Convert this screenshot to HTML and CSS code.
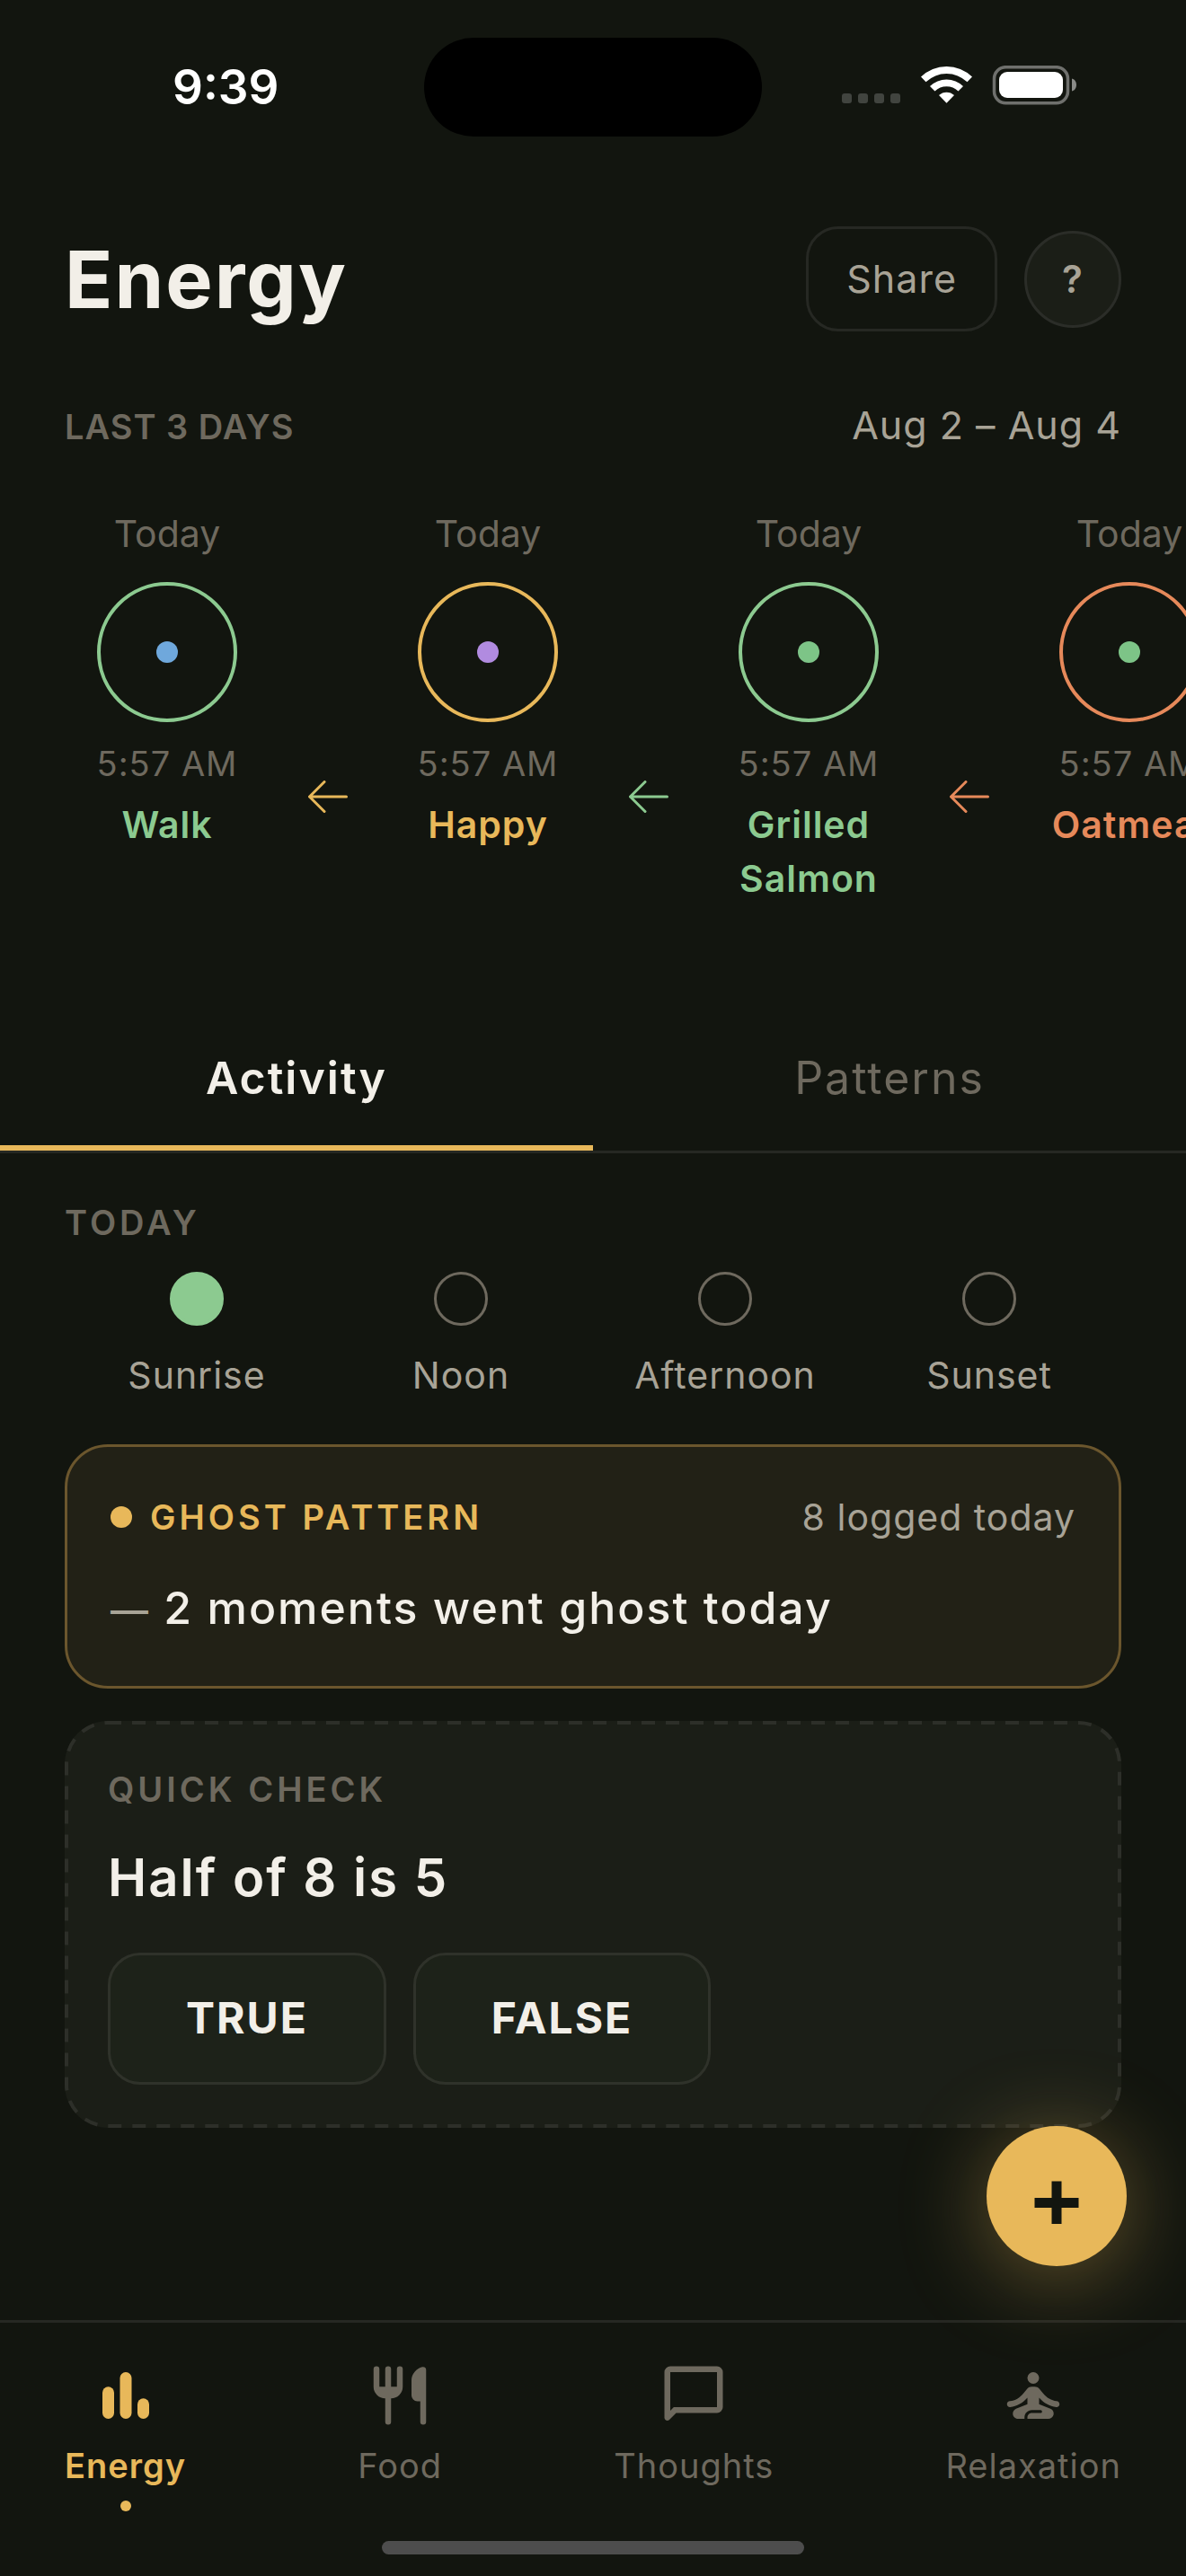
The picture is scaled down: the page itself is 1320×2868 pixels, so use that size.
FILE: index.html
```html
<!DOCTYPE html>
<html lang="en">
<head>
<meta charset="utf-8">
<meta name="viewport" content="width=device-width">
<title>Energy</title>
<link rel="stylesheet" href="styles.css">
</head>
<body>
<div class="status">
  <time class="status-time">9:39</time>
  <div class="island"></div>
  <svg class="status-icons" viewBox="0 0 262 48" aria-hidden="true">
    <g fill="#41443f"><rect x="0" y="31" width="11" height="11" rx="3"/><rect x="18" y="31" width="11" height="11" rx="3"/><rect x="36" y="31" width="11" height="11" rx="3"/><rect x="54" y="31" width="11" height="11" rx="3"/></g>
    <g fill="#fff">
      <path d="M88 12.500a41 41 0 0 1 57 0l-5.500 5.800a33 33 0 0 0-46 0z"/>
      <path d="M98 23a26.500 26.500 0 0 1 37 0l-5.500 5.500a19 19 0 0 0-26 0z"/>
      <path d="M108 33a12.500 12.500 0 0 1 17 0l-8.500 8.700z"/>
      <rect x="175" y="7" width="71" height="29" rx="9"/>
    </g>
    <rect x="169.500" y="1.700" width="82" height="40" rx="13" fill="none" stroke="#6f706d" stroke-width="3.500"/>
    <path d="M256 14.500c3.500 1 5 4 5 7s-1.500 6-5 7z" fill="#8a8b88"/>
  </svg>
</div>

<main class="page">
  <header class="header">
    <h1 class="title">Energy</h1>
    <button class="share" type="button">Share</button>
    <button class="help" type="button" aria-label="Help">?</button>
  </header>

  <div class="range">
    <h2 class="caption caption-tight">LAST 3 DAYS</h2>
    <span class="range-dates">Aug 2 – Aug 4</span>
  </div>

  <div class="timeline">
    <article class="moment green"><span class="day">Today</span><span class="ring"><i class="core core-blue"></i></span><span class="clock">5:57 AM</span><span class="name">Walk</span></article>
    <svg class="arrow gold" viewBox="0 0 44 36"><path d="M42.500 18H1.500M18 1.500L1.500 18 18 34.500"/></svg>
    <article class="moment gold"><span class="day">Today</span><span class="ring"><i class="core core-purple"></i></span><span class="clock">5:57 AM</span><span class="name">Happy</span></article>
    <svg class="arrow green" viewBox="0 0 44 36"><path d="M42.500 18H1.500M18 1.500L1.500 18 18 34.500"/></svg>
    <article class="moment green"><span class="day">Today</span><span class="ring"><i class="core core-green"></i></span><span class="clock">5:57 AM</span><span class="name">Grilled Salmon</span></article>
    <svg class="arrow orange" viewBox="0 0 44 36"><path d="M42.500 18H1.500M18 1.500L1.500 18 18 34.500"/></svg>
    <article class="moment orange"><span class="day">Today</span><span class="ring"><i class="core core-green"></i></span><span class="clock">5:57 AM</span><span class="name">Oatmeal</span></article>
  </div>

  <div class="tabs" role="tablist">
    <button class="tab tab-active" type="button" role="tab" aria-selected="true">Activity</button>
    <button class="tab" type="button" role="tab" aria-selected="false">Patterns</button>
  </div>

  <section class="today">
    <h2 class="caption">TODAY</h2>
    <ul class="phases">
      <li class="phase"><i class="phase-dot phase-done"></i>Sunrise</li>
      <li class="phase"><i class="phase-dot"></i>Noon</li>
      <li class="phase"><i class="phase-dot"></i>Afternoon</li>
      <li class="phase"><i class="phase-dot"></i>Sunset</li>
    </ul>
  </section>

  <section class="card ghost">
    <div class="ghost-head">
      <i class="ghost-dot"></i>
      <h2 class="caption ghost-title">GHOST PATTERN</h2>
      <span class="ghost-count">8 logged today</span>
    </div>
    <p class="ghost-text"><span class="dash">—</span> 2 moments went ghost today</p>
  </section>

  <section class="card quick">
    <svg class="quick-edge" aria-hidden="true"><rect class="quick-line" x="2" y="2" rx="46"/></svg>
    <h2 class="caption">QUICK CHECK</h2>
    <p class="question">Half of 8 is 5</p>
    <div class="answers">
      <button class="answer" type="button">TRUE</button>
      <button class="answer" type="button">FALSE</button>
    </div>
  </section>
</main>

<nav class="nav">
  <div class="nav-items">
    <a class="nav-item nav-active" href="#energy" aria-current="page">
      <svg class="nav-icon" viewBox="0 0 24 24"><rect x="4" y="9" width="4" height="11" rx="2"/><rect x="10" y="4" width="4" height="16" rx="2"/><rect x="16" y="13" width="4" height="7" rx="2"/></svg>
      Energy
    </a>
    <a class="nav-item" href="#food">
      <svg class="nav-icon" viewBox="0 0 24 24"><path d="M7 9V3a1 1 0 0 1 2 0v6h2V3a1 1 0 0 1 2 0v6a4 4 0 0 1-4 4v8a1 1 0 0 1-2 0v-8a4 4 0 0 1-4-4V3a1 1 0 0 1 2 0v6z"/><path d="M16 6.800c0-2.100 1.700-4.100 3.700-4.550a1 1 0 0 1 1.300 1V21a1 1 0 0 1-2 0v-7h-1a2 2 0 0 1-2-2z"/></svg>
      Food
    </a>
    <a class="nav-item" href="#thoughts">
      <svg class="nav-icon" viewBox="0 0 24 24"><path fill-rule="evenodd" d="M20 2H4a2 2 0 0 0-2 2v15.600c0 .89 1.080 1.340 1.700.7L6 18h14a2 2 0 0 0 2-2V4a2 2 0 0 0-2-2zM20 16H5.200L4 17.200V4h16z"/></svg>
      Thoughts
    </a>
    <a class="nav-item" href="#relaxation">
      <svg class="nav-icon" viewBox="0 0 24 24"><circle cx="12" cy="6" r="2"/><path d="M21 15c0-.56-.46-1-1.010-1.050-1.800-.2-3.350-1.130-4.590-2.630l-1.340-1.600C13.680 9.260 13.120 9 12.530 9h-1.050c-.6 0-1.150.26-1.530.72l-1.340 1.600C7.370 12.820 5.820 13.770 4 13.960 3.450 14 3 14.440 3 15c0 .6.5 1.040 1.100.98 2.300-.28 4.320-1.430 5.900-3.230V15l-3.880 1.550C5.450 16.820 5 17.480 5 18.210 5 19.200 5.800 20 6.790 20H9v-.5c0-1.380 1.120-2.500 2.500-2.500h3c.28 0 .5.22.5.5s-.22.5-.5.5h-3c-.83 0-1.500.67-1.500 1.500v.5h7.100c.85 0 1.650-.54 1.850-1.370.21-.89-.27-1.760-1.080-2.080L14 15v-2.250c1.580 1.800 3.600 2.950 5.900 3.230.6.060 1.100-.38 1.100-.98z"/></svg>
      Relaxation
    </a>
  </div>
  <div class="home-bar"></div>
</nav>

<button class="add" type="button" aria-label="Add moment">
  <svg class="add-icon" viewBox="0 0 156 156"><path d="M72.500 61.500h11v18.500h19v11h-19v18h-11v-18h-19v-11h19z"/></svg>
</button>
</body>
</html>
```
FILE: styles.css
```css
:root {
  --bg: #12150f;
  --text: #f2efe8;
  --soft: #a8a396;
  --muted: #6e695e;
  --line: #262823;
  --gold: #e8b85a;
  --green: #8cca90;
  --orange: #e6895a;
  --pad: 72px;
  --track: 1px;
  --track-large: 2px;
  --track-caps: 4px;
}

* { box-sizing: border-box; }

body {
  margin: 0;
  min-height: 100vh;
  display: flex;
  flex-direction: column;
  background: var(--bg);
  color: var(--text);
  font-family: Inter, "Liberation Sans", sans-serif;
  font-size: 41px;
  line-height: 54px;
  letter-spacing: var(--track);
}

h1, h2, p, ul { margin: 0; padding: 0; }
button { font: inherit; letter-spacing: inherit; color: inherit; cursor: pointer; }

/* Status bar */
.status {
  display: grid;
  grid-template-columns: 1fr 376px 1fr;
  align-items: center;
  padding: 42px var(--pad) 34px;
}
.status-time {
  padding-left: 120px;
  color: #fff;
  font-size: 53px;
  font-weight: 600;
  letter-spacing: 0;
}
.island { height: 110px; border-radius: 55px; background: #000; }
.status-icons { width: 262px; height: 48px; margin-right: 49px; justify-self: end; }

/* Header */
.page { flex: 1; }
.header {
  display: flex;
  align-items: center;
  gap: 30px;
  padding: 66px var(--pad) 0;
}
.title {
  flex: 1;
  font-size: 88px;
  line-height: 108px;
  font-weight: 700;
  letter-spacing: var(--track-large);
}
.share {
  padding: 28px 42px 29px;
  border: 3px solid var(--line);
  border-radius: 36px;
  background: none;
  color: var(--soft);
  font-size: 43px;
}
.help {
  width: 108px;
  height: 108px;
  padding: 0;
  border: 3px solid #2b2d28;
  border-radius: 50%;
  background: #1b1e17;
  color: var(--soft);
  font-size: 42px;
  font-weight: 600;
}

.caption {
  font-size: 38px;
  line-height: 48px;
  font-weight: 600;
  letter-spacing: var(--track-caps);
  color: var(--muted);
}
.caption-tight { letter-spacing: var(--track); }

.range {
  display: flex;
  justify-content: space-between;
  align-items: baseline;
  padding: 77px var(--pad) 0;
}
.range-dates { color: var(--soft); font-size: 43px; }

/* Timeline */
.timeline {
  display: flex;
  align-items: flex-start;
  margin-top: 67px;
  padding: 0 var(--pad);
  overflow-x: auto;
  scrollbar-width: none;
}
.moment {
  flex: 0 0 228px;
  display: flex;
  flex-direction: column;
  align-items: center;
  text-align: center;
}
.day { color: var(--muted); letter-spacing: 0; }
.ring {
  display: grid;
  place-items: center;
  width: 156px;
  height: 156px;
  margin: 27px 0 22px;
  border: 4px solid currentColor;
  border-radius: 50%;
}
.core { width: 24px; height: 24px; border-radius: 50%; }
.core-blue { background: #6fa8dc; }
.core-purple { background: #b18be0; }
.core-green { background: #7dc487; }
.clock { color: var(--muted); font-size: 38px; line-height: 48px; }
.name { margin-top: 14px; line-height: 60px; font-weight: 600; }
.arrow {
  flex: 0 0 44px;
  height: 36px;
  margin: 302px 42px 0 43px;
  fill: none;
  stroke: currentColor;
  stroke-width: 3;
  stroke-linecap: round;
  stroke-linejoin: round;
}
.green { color: var(--green); }
.gold { color: var(--gold); }
.orange { color: var(--orange); }

/* Tabs */
.tabs {
  display: grid;
  grid-template-columns: 1fr 1fr;
  margin-top: 117px;
  border-bottom: 3px solid var(--line);
}
.tab {
  padding: 45px 0;
  border: 0;
  border-bottom: 6px solid transparent;
  background: none;
  color: var(--muted);
  font-size: 50px;
  line-height: 60px;
  letter-spacing: var(--track-large);
}
.tab-active { border-color: var(--gold); color: var(--text); font-weight: 600; }

/* Phases of the day */
.today { padding: 53px var(--pad) 50px; }
.phases {
  display: grid;
  grid-template-columns: repeat(4, 1fr);
  margin-top: 31px;
  list-style: none;
}
.phase {
  display: flex;
  flex-direction: column;
  align-items: center;
  gap: 28px;
  color: var(--soft);
}
.phase-dot {
  width: 60px;
  height: 60px;
  border: 3px solid var(--muted);
  border-radius: 50%;
}
.phase-done { border-color: var(--green); background: var(--green); }

/* Cards */
.card { margin: 0 var(--pad) 36px; border-radius: 48px; }
.ghost {
  padding: 51px 48px 54px;
  border: 3px solid #6b562d;
  background: #222116;
}
.ghost-head { display: flex; align-items: center; gap: 20px; }
.ghost-dot { width: 24px; height: 24px; border-radius: 50%; background: var(--gold); }
.ghost-title { flex: 1; color: var(--gold); }
.ghost-count { color: var(--soft); }
.ghost-text {
  margin-top: 41px;
  font-size: 50px;
  line-height: 66px;
  font-weight: 500;
  letter-spacing: var(--track-large);
}
.dash { color: var(--soft); font-size: 42px; line-height: 42px; }

.quick { position: relative; padding: 52px 48px 48px; background: #1b1e17; }
.quick-edge { position: absolute; inset: 0; width: 100%; height: 100%; }
.quick-line {
  width: calc(100% - 4px);
  height: calc(100% - 4px);
  fill: none;
  stroke: #2d2f29;
  stroke-width: 4;
  stroke-dasharray: 15 12;
}
.question {
  margin-top: 35px;
  font-size: 58px;
  line-height: 78px;
  font-weight: 600;
  letter-spacing: var(--track-large);
}
.answers { display: flex; gap: 30px; margin-top: 45px; }
.answer {
  position: relative;
  padding: 43px 84px 44px;
  border: 3px solid #2f322a;
  border-radius: 36px;
  background: #1d2219;
  font-size: 48px;
  font-weight: 700;
  line-height: 54px;
  letter-spacing: var(--track-large);
}

/* Bottom navigation */
.nav { padding: 42px var(--pad) 24px; border-top: 3px solid var(--line); }
.nav-items { display: flex; justify-content: space-between; align-items: flex-start; }
.nav-item {
  display: flex;
  flex-direction: column;
  align-items: center;
  gap: 15px;
  color: var(--muted);
  font-size: 38px;
  line-height: 48px;
  text-decoration: none;
}
.nav-icon { width: 78px; height: 78px; fill: currentColor; }
.nav-active { color: var(--gold); font-weight: 600; }
.nav-active::after {
  content: "";
  width: 12px;
  height: 12px;
  border-radius: 50%;
  background: currentColor;
}
.home-bar {
  width: 40%;
  height: 15px;
  margin: 33px auto 0;
  border-radius: 8px;
  background: #4d4d4d;
}

/* Floating add button */
.add {
  position: fixed;
  right: 66px;
  bottom: 345px;
  width: 156px;
  height: 156px;
  padding: 0;
  border: 0;
  border-radius: 50%;
  background: var(--gold);
  box-shadow: 0 12px 96px rgba(232, 184, 90, 0.4);
}
.add-icon { display: block; width: 156px; height: 156px; fill: var(--bg); }
```
